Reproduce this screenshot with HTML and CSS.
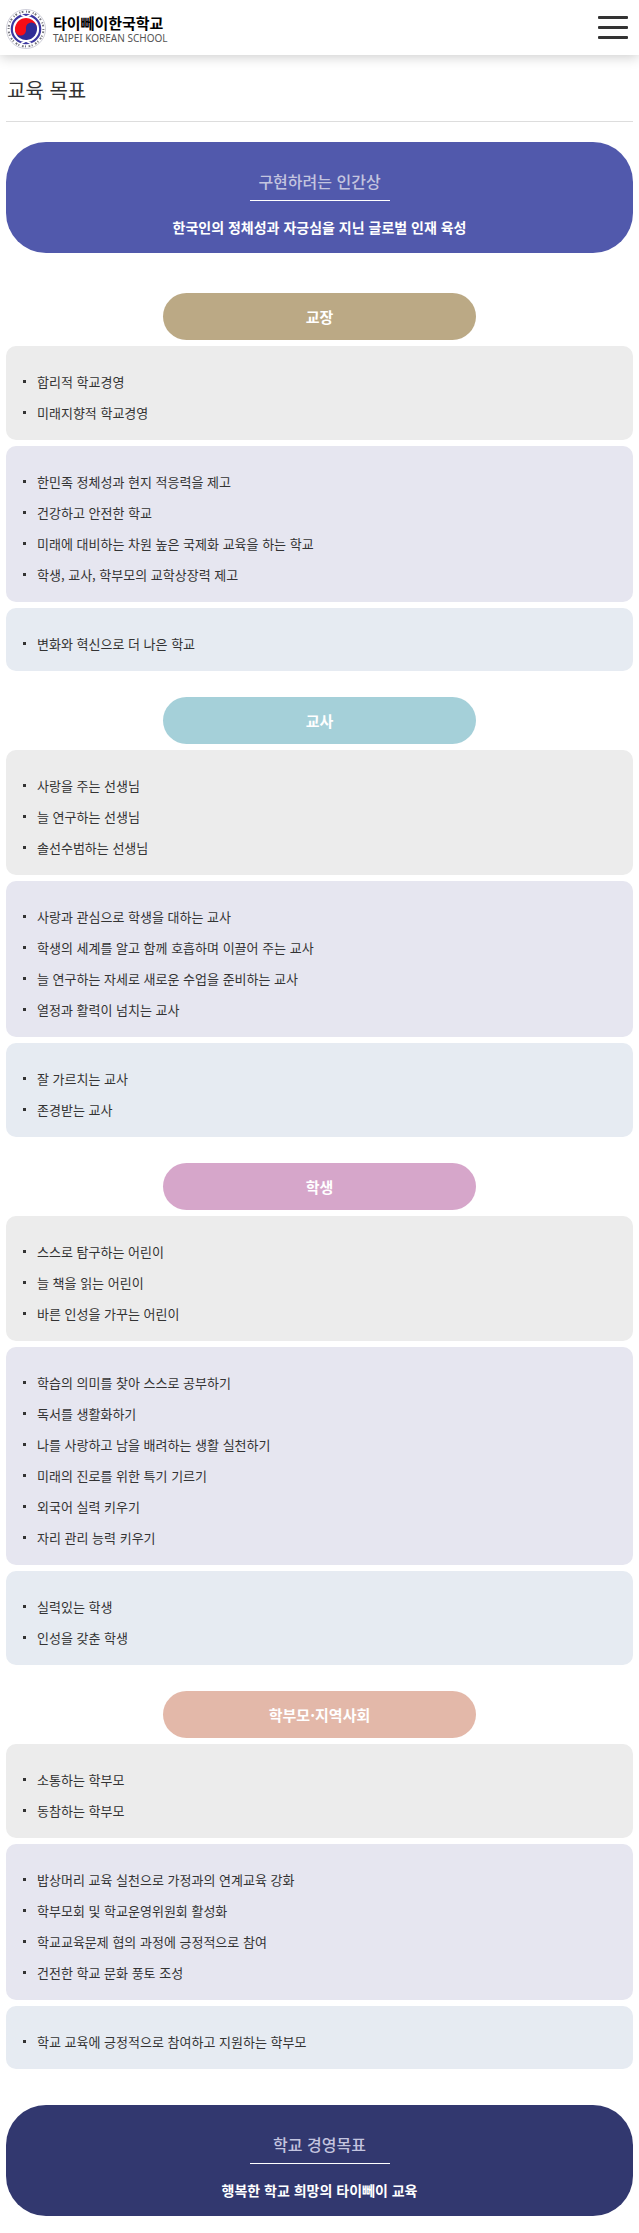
FILE: index.html
```html
<!DOCTYPE html>
<html lang="ko">
<head>
<meta charset="utf-8">
<meta name="viewport" content="width=device-width, initial-scale=1">
<title>교육 목표 - 타이뻬이한국학교</title>
<link rel="stylesheet" href="styles.css">
</head>
<body>
<header class="header">
  <a class="logo" href="#">
    <svg class="logo-mark" viewBox="0 0 40 40" aria-hidden="true">
      <circle cx="20" cy="20" r="19.5" fill="#fff" stroke="#b9b9c9" stroke-width=".7"/>
      <circle cx="20" cy="20" r="17.4" fill="none" stroke="#77777f" stroke-width="2" stroke-dasharray="1 1.200 1.600 2.450" pathLength="100"/>
      <circle cx="20" cy="20" r="14.2" fill="#fff" stroke="#3b37a0" stroke-width="2.2"/>
      <path d="M15 5.500 20 8l5-2.500M15 34.500 20 32l5 2.500" fill="none" stroke="#fff" stroke-width="1.600"/>
      <path d="M9 20a11 11 0 0 1 22 0z" fill="#f70d16" transform="rotate(-10 20 20)"/>
      <path d="M9 20a11 11 0 0 0 22 0z" fill="#2f2c96" transform="rotate(-10 20 20)"/>
      <circle cx="14.600" cy="21" r="5.500" fill="#f70d16"/>
      <circle cx="25.400" cy="19" r="5.500" fill="#2f2c96"/>
    </svg>
    <span class="logo-text">
      <strong class="logo-name">타이뻬이한국학교</strong>
      <span class="logo-sub">TAIPEI KOREAN SCHOOL</span>
    </span>
  </a>
  <button class="menu" type="button" aria-label="메뉴">
    <span class="menu-bar"></span><span class="menu-bar"></span><span class="menu-bar"></span>
  </button>
</header>
<main class="content">
  <h1 class="page-title">교육 목표</h1>
  <section class="banner">
    <h2 class="banner-title">구현하려는 인간상</h2>
    <p class="banner-text">한국인의 정체성과 자긍심을 지닌 글로벌 인재 육성</p>
  </section>
  <div class="groups">
    <section class="group">
      <h2 class="pill pill-principal">교장</h2>
      <ul class="card card-gray"><li>합리적 학교경영</li><li>미래지향적 학교경영</li></ul>
      <ul class="card card-violet"><li>한민족 정체성과 현지 적응력을 제고</li><li>건강하고 안전한 학교</li><li>미래에 대비하는 차원 높은 국제화 교육을 하는 학교</li><li>학생, 교사, 학부모의 교학상장력 제고</li></ul>
      <ul class="card card-blue"><li>변화와 혁신으로 더 나은 학교</li></ul>
    </section>
    <section class="group">
      <h2 class="pill pill-teacher">교사</h2>
      <ul class="card card-gray"><li>사랑을 주는 선생님</li><li>늘 연구하는 선생님</li><li>솔선수범하는 선생님</li></ul>
      <ul class="card card-violet"><li>사랑과 관심으로 학생을 대하는 교사</li><li>학생의 세계를 알고 함께 호흡하며 이끌어 주는 교사</li><li>늘 연구하는 자세로 새로운 수업을 준비하는 교사</li><li>열정과 활력이 넘치는 교사</li></ul>
      <ul class="card card-blue"><li>잘 가르치는 교사</li><li>존경받는 교사</li></ul>
    </section>
    <section class="group">
      <h2 class="pill pill-student">학생</h2>
      <ul class="card card-gray"><li>스스로 탐구하는 어린이</li><li>늘 책을 읽는 어린이</li><li>바른 인성을 가꾸는 어린이</li></ul>
      <ul class="card card-violet"><li>학습의 의미를 찾아 스스로 공부하기</li><li>독서를 생활화하기</li><li>나를 사랑하고 남을 배려하는 생활 실천하기</li><li>미래의 진로를 위한 특기 기르기</li><li>외국어 실력 키우기</li><li>자리 관리 능력 키우기</li></ul>
      <ul class="card card-blue"><li>실력있는 학생</li><li>인성을 갖춘 학생</li></ul>
    </section>
    <section class="group">
      <h2 class="pill pill-parent">학부모·지역사회</h2>
      <ul class="card card-gray"><li>소통하는 학부모</li><li>동참하는 학부모</li></ul>
      <ul class="card card-violet"><li>밥상머리 교육 실천으로 가정과의 연계교육 강화</li><li>학부모회 및 학교운영위원회 활성화</li><li>학교교육문제 협의 과정에 긍정적으로 참여</li><li>건전한 학교 문화 풍토 조성</li></ul>
      <ul class="card card-blue"><li>학교 교육에 긍정적으로 참여하고 지원하는 학부모</li></ul>
    </section>
  </div>
  <section class="banner banner-dark">
    <h2 class="banner-title">학교 경영목표</h2>
    <p class="banner-text">행복한 학교 희망의 타이뻬이 교육</p>
  </section>
</main>
</body>
</html>
```
FILE: styles.css
```css
* { box-sizing: border-box; }

body, h1, h2, p, ul { margin: 0; padding: 0; }

body {
  background: #fff;
  color: #333;
  font-family: "Noto Sans CJK KR", "Noto Sans", sans-serif;
  font-size: 13px;
}

.header {
  display: flex;
  align-items: center;
  justify-content: space-between;
  height: 55px;
  padding: 0 11px 0 6px;
  background: #fff;
  box-shadow: 0 2px 12px rgba(0, 0, 0, .2);
}

.logo {
  display: flex;
  align-items: center;
  gap: 7px;
  padding-top: 3px;
  color: #000;
  text-decoration: none;
}

.logo-mark { width: 40px; height: 40px; }

.logo-text { display: flex; flex-direction: column; }

.logo-name { font-size: 15px; line-height: 18px; font-weight: 700; }

.logo-sub {
  color: #555;
  font-family: "Noto Sans", sans-serif;
  font-size: 10px;
  line-height: 12px;
}

.menu {
  display: flex;
  flex-direction: column;
  gap: 7px;
  width: 30px;
  padding: 0;
  border: 0;
  background: none;
}

.menu-bar { height: 3px; border-radius: 1px; background: #333; }

.content { padding: 0 6px 17px; }

.page-title {
  padding: 18px 1px 15px;
  border-bottom: 1px solid #ddd;
  font-size: 20px;
  line-height: 33px;
  font-weight: 400;
}

.banner {
  display: flex;
  flex-direction: column;
  align-items: center;
  margin-top: 20px;
  padding: 24px 16px 11px;
  border-radius: 40px;
  background: #5159ac;
  color: #fff;
  text-align: center;
}

.banner-title {
  min-width: 140px;
  margin-bottom: 11px;
  padding-bottom: 4px;
  border-bottom: 1px solid #fff;
  color: #c3c4df;
  font-size: 16px;
  line-height: 30px;
  font-weight: 500;
}

.banner-text { font-size: 14px; line-height: 30px; font-weight: 700; }

.banner-dark { margin-top: 36px; background: #32386f; }

.groups {
  display: flex;
  flex-direction: column;
  gap: 26px;
  margin-top: 40px;
}

.group { display: flex; flex-direction: column; gap: 6px; }

.pill {
  align-self: center;
  width: 50%;
  border-radius: 24px;
  color: #fff;
  font-size: 15px;
  line-height: 47px;
  font-weight: 700;
  text-align: center;
}

.pill-principal { background: #bba985; }
.pill-teacher { background: #a5d0d9; }
.pill-student { background: #d6a6ca; }
.pill-parent { background: #e3b8a9; }

.card {
  padding: 20px 17px 12px;
  border-radius: 10px;
  list-style: none;
}

.card-gray { background: #ececec; }
.card-violet { background: #e6e6f0; }
.card-blue { background: #e6ebf2; }

.card li {
  display: flex;
  align-items: center;
  gap: 11px;
  line-height: 31px;
}

.card li::before {
  content: "";
  flex: none;
  width: 3px;
  height: 3px;
  background: #333;
}
```
